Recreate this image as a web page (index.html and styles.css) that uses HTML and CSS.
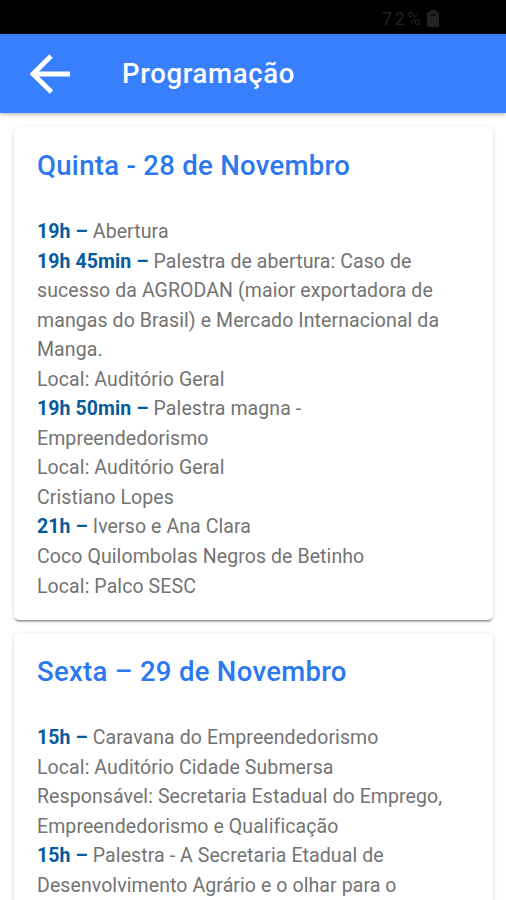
FILE: index.html
```html
<!DOCTYPE html>
<html lang="pt-BR">
<head>
<meta charset="utf-8">
<title>Programação</title>
<link rel="stylesheet" href="styles.css">
</head>
<body>
<div class="status"><span>72%</span><svg width="12" height="17" viewBox="0 0 12 17"><path d="M3 0h6v2h1.500a1.500 1.500 0 0 1 1.500 1.500v12a1.500 1.500 0 0 1-1.500 1.500h-9A1.500 1.500 0 0 1 0 15.500v-12A1.500 1.500 0 0 1 1.500 2H3z" fill="#222"/><path d="M3 5h6" stroke="#000"/></svg></div>
<header class="bar">
<svg class="back" width="40" height="40" viewBox="0 0 40 40"><path d="M40 20H4M21 2L3 20L21.500 38" fill="none" stroke="#fff" stroke-width="4.800"/></svg>
<h1>Programação</h1>
</header>
<main>
<section class="card">
<h2>Quinta - 28 de Novembro</h2>
<p><b>19h –</b> Abertura<br><b>19h 45min –</b> Palestra de abertura: Caso de<br>sucesso da AGRODAN (maior exportadora de<br>mangas do Brasil) e Mercado Internacional da<br>Manga.<br>Local: Auditório Geral<br><b>19h 50min –</b> Palestra magna -<br>Empreendedorismo<br>Local: Auditório Geral<br>Cristiano Lopes<br><b>21h –</b> Iverso e Ana Clara<br>Coco Quilombolas Negros de Betinho<br>Local: Palco SESC</p>
</section>
<section class="card">
<h2>Sexta – 29 de Novembro</h2>
<p><b>15h –</b> Caravana do Empreendedorismo<br>Local: Auditório Cidade Submersa<br>Responsável: Secretaria Estadual do Emprego,<br>Empreendedorismo e Qualificação<br><b>15h –</b> Palestra - A Secretaria Etadual de<br>Desenvolvimento Agrário e o olhar para o</p>
</section>
</main>
</body>
</html>
```
FILE: styles.css
```css
* { box-sizing: border-box; margin: 0; }
body { height: 900px; overflow: hidden; background: #fff; font-family: Roboto, sans-serif; display: flex; flex-direction: column; }
.status { height: 34px; flex: none; background: #000; color: #222; display: flex; justify-content: flex-end; align-items: center; gap: 4px; padding: 2px 67px 0 0; font-size: 18px; letter-spacing: 2.5px; }
.bar { position: relative; height: 79px; flex: none; background: #387ffd; color: #fff; display: flex; align-items: center; padding-left: 30px; box-shadow: 0 1px 4px rgba(0,0,0,.35); }
.bar h1 { margin-left: 52px; font-size: 27.500px; font-weight: 500; letter-spacing: .65px; }
main { flex: 1; min-height: 0; overflow: hidden; padding: 14px 13px 0 14px; display: flex; flex-direction: column; gap: 13px; }
.card { height: 493px; flex: none; border-radius: 5px; padding: 19px 23px; background: #fff; box-shadow: 0 3px 2px -2px rgba(0,0,0,.38), 0 2px 2px rgba(0,0,0,.12), 0 1px 5px rgba(0,0,0,.12); white-space: nowrap; }
.card h2 { color: #2b78f0; font-size: 27.500px; line-height: 40px; font-weight: 500; letter-spacing: .3px; }
.card p { margin-top: 31px; color: #737373; font-size: 19.500px; line-height: 29.540px; letter-spacing: .09px; }
.card b { color: #075a9c; font-weight: 700; }
```
